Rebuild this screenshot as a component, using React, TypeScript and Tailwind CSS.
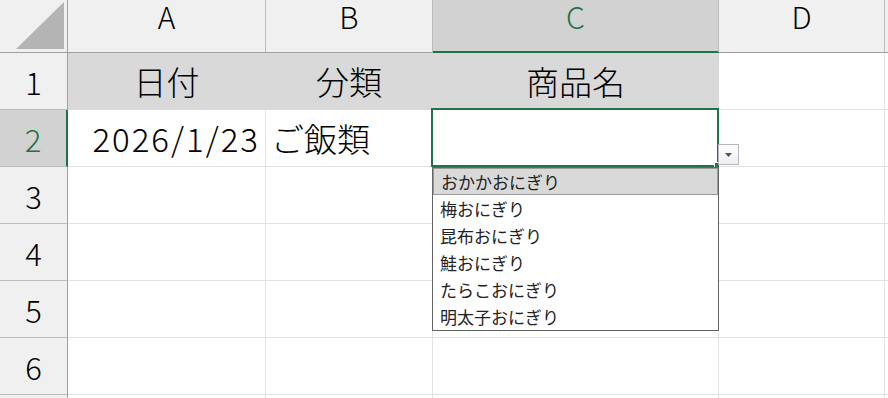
import React from 'react';

const columns = [
  { id: 'A', width: 'w-[198px]' },
  { id: 'B', width: 'w-[167px]' },
  { id: 'C', width: 'w-[286px]' },
  { id: 'D', width: 'w-[166px]' },
];

const options = ['おかかおにぎり', '梅おにぎり', '昆布おにぎり', '鮭おにぎり', 'たらこおにぎり', '明太子おにぎり'];

const RowHeader: React.FC<{ n: number; active?: boolean }> = ({ n, active }) => (
  <div
    className={`w-[68px] shrink-0 flex items-center justify-center border-b border-b-[#bcbcbc] text-[31px] leading-none ${
      active
        ? 'bg-[#d2d2d2] border-r-2 border-r-[#217346] text-[#217346]'
        : 'bg-[#f0f0f0] border-r border-r-[#a0a0a0] text-black'
    }`}
  >
    {n}
  </div>
);

export default function App() {
  return (
    <div className="relative w-[888px] h-[398px] overflow-hidden bg-white font-['Noto_Sans_CJK_JP','Noto_Sans',sans-serif] font-light text-black">
      {/* column headers */}
      <div className="flex h-[53px]">
        <div className="w-[68px] shrink-0 flex items-end justify-end pr-[3px] pb-[3px] bg-[#f0f0f0] border-r border-b border-[#a0a0a0]">
          <svg width="48" height="47" viewBox="0 0 48 47">
            <polygon points="0,47 48,47 48,0" fill="#b4b4b4" />
          </svg>
        </div>
        {columns.map((c) => (
          <div
            key={c.id}
            className={`${c.width} shrink-0 flex items-center justify-center pb-[20px] text-[30px] leading-none border-r border-r-[#bcbcbc] ${
              c.id === 'C'
                ? 'bg-[#d2d2d2] border-b-2 border-b-[#217346] text-[#217346]'
                : 'bg-[#f0f0f0] border-b border-b-[#a0a0a0]'
            }`}
          >
            {c.id}
          </div>
        ))}
        <div className="flex-1 bg-[#f0f0f0] border-b border-b-[#a0a0a0]" />
      </div>

      {/* row 1 */}
      <div className="flex h-[57px] text-[33px] leading-none">
        <RowHeader n={1} />
        <div className="w-[198px] shrink-0 flex items-center justify-center bg-[#d9d9d9] border-r border-b border-[#d9d9d9]">日付</div>
        <div className="w-[167px] shrink-0 flex items-center justify-center bg-[#d9d9d9] border-r border-b border-[#d9d9d9]">分類</div>
        <div className="w-[286px] shrink-0 flex items-center justify-center bg-[#d9d9d9] border-r border-b border-[#d9d9d9]">商品名</div>
        <div className="w-[166px] shrink-0 border-r border-b border-[#e1e1e1]" />
        <div className="flex-1 border-b border-[#e1e1e1]" />
      </div>

      {/* row 2 */}
      <div className="flex h-[57px] text-[33px] leading-none">
        <RowHeader n={2} active />
        <div className="w-[198px] shrink-0 flex items-center justify-end pr-[5px] tracking-[2px] border-r border-b border-[#e1e1e1]">2026/1/23</div>
        <div className="w-[167px] shrink-0 flex items-center pl-[5px] border-r border-b border-[#e1e1e1]">ご飯類</div>
        <div className="w-[286px] shrink-0 border-r border-b border-[#e1e1e1]" />
        <div className="w-[166px] shrink-0 border-r border-b border-[#e1e1e1]" />
        <div className="flex-1 border-b border-[#e1e1e1]" />
      </div>

      {/* empty rows */}
      {[3, 4, 5, 6, 7].map((n) => (
        <div key={n} className="flex h-[57px]">
          <RowHeader n={n} />
          {columns.map((c) => (
            <div key={c.id} className={`${c.width} shrink-0 border-r border-b border-[#e1e1e1]`} />
          ))}
          <div className="flex-1 border-b border-[#e1e1e1]" />
        </div>
      ))}

      {/* active cell C2 */}
      <div className="absolute left-[431px] top-[108px] w-[288px] h-[59px] border-2 border-[#217346]" />
      <div className="absolute left-[714px] top-[162px] w-[6px] h-[6px] bg-[#217346] border border-white" />

      {/* dropdown button */}
      <div className="absolute left-[718px] top-[144px] w-[21px] h-[21px] flex items-center justify-center border border-[#b4b6c0] bg-gradient-to-b from-white to-[#eeeeee]">
        <svg width="7" height="4" viewBox="0 0 7 4">
          <polygon points="0,0 7,0 3.5,4" fill="#555555" />
        </svg>
      </div>

      {/* dropdown list */}
      <div className="absolute left-[432px] top-[167px] w-[287px] border border-[#646464] bg-white text-[17px] font-normal text-[#222]">
        {options.map((o, i) => (
          <div
            key={o}
            className={`h-[27px] flex items-center pl-[7px] ${
              i === 0 ? 'bg-[#d9d9d9] border border-[#9a9a9a] pl-[6px]' : ''
            }`}
          >
            {o}
          </div>
        ))}
      </div>
    </div>
  );
}
